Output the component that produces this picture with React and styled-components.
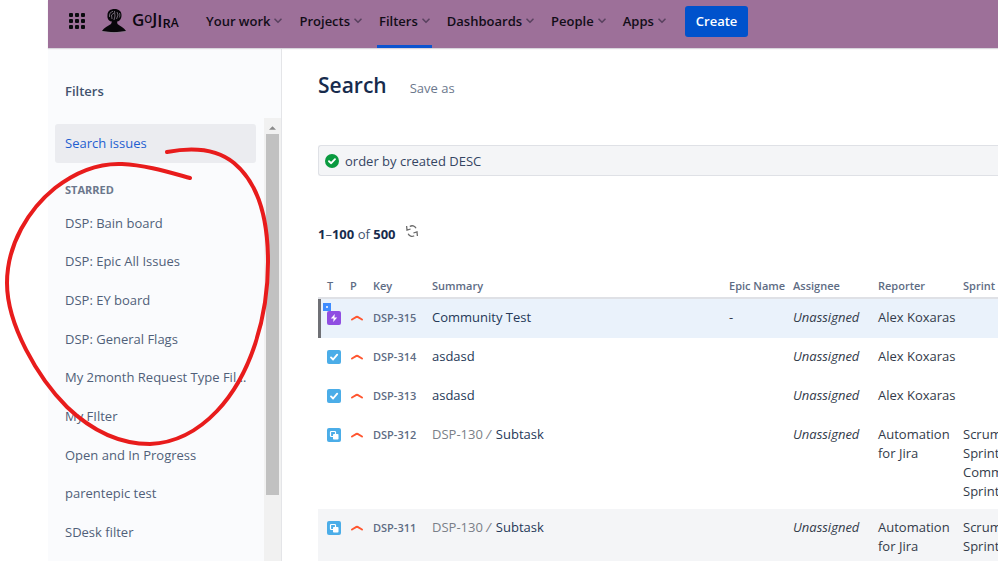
import React, { useState } from 'react';
import styled, { createGlobalStyle, css } from 'styled-components';

const starred = [
  'DSP: Bain board',
  'DSP: Epic All Issues',
  'DSP: EY board',
  'DSP: General Flags',
  'My 2month Request Type Filter',
  'My FIlter',
  'Open and In Progress',
  'parentepic test',
  'SDesk filter',
];

const navItems = ['Your work', 'Projects', 'Filters', 'Dashboards', 'People', 'Apps'];

const sprints = ['Scrum', 'Sprint', 'Comm', 'Sprint'];

const issues = [
  { key: 'DSP-315', type: 'epic', summary: 'Community Test', epic: '-', reporter: 'Alex Koxaras', selected: true },
  { key: 'DSP-314', type: 'task', summary: 'asdasd', reporter: 'Alex Koxaras' },
  { key: 'DSP-313', type: 'task', summary: 'asdasd', reporter: 'Alex Koxaras' },
  { key: 'DSP-312', type: 'subtask', parent: 'DSP-130', summary: 'Subtask', reporter: 'Automation for Jira', sprints },
  { key: 'DSP-311', type: 'subtask', parent: 'DSP-130', summary: 'Subtask', reporter: 'Automation for Jira', sprints, shaded: true },
];

const AppSwitcherIcon = () => (
  <svg width="16" height="16" viewBox="0 0 16 16" fill="#0b0b0f">
    {[0, 6, 12].map((y) => [0, 6, 12].map((x) => (
      <rect key={`${x}-${y}`} x={x} y={y} width="4" height="4" rx="1" />
    )))}
  </svg>
);

const Logo = () => (
  <svg width="82" height="30" viewBox="0 0 82 30" role="img" aria-label="Gojira">
    <path d="M0 25 C2 21.500 6 20 9 18 L10 15.500 C7 15.500 5 13 5.500 9 C5.500 5 8.500 3 12.500 3 C17 3 19.500 5.500 19.500 9 C19.500 13 17.500 15.500 15 15.500 L15.500 18 C18 20 22 21.500 24 25 C17 26.500 7 26.500 0 25 Z" fill="#08060a" />
    <path d="M7.500 11 C7 8 8.500 5.800 11 5.300 M10 13 L9.500 9 L12 7 M12.500 5 L13 10 L12 14 M15 6 L16 9 L14.500 13 M17.500 7 C18 8.500 18 10 17.300 11.500" fill="none" stroke="#9b8f9f" strokeWidth="0.700" />
    <path d="M0 25.500 C7 27 17 27 24 25.500" fill="none" stroke="#8c8090" strokeWidth="0.800" />
    <LogoText x="30" y="20">
      <tspan fontSize="17">G</tspan>
      <tspan fontSize="10" dy="-3">O</tspan>
      <tspan fontSize="17" dy="2">J</tspan>
      <tspan fontSize="17" dy="2">I</tspan>
      <tspan fontSize="13" dy="1">R</tspan>
      <tspan fontSize="12" dy="-1">A</tspan>
    </LogoText>
  </svg>
);

const Chevron = () => (
  <svg width="8" height="6" viewBox="0 0 8 6" fill="none" stroke="#5a4260" strokeWidth="1.600" strokeLinecap="round" strokeLinejoin="round">
    <path d="M1 1.200 L4 4.300 L7 1.200" />
  </svg>
);

const ValidIcon = () => (
  <svg width="14" height="14" viewBox="0 0 14 14">
    <circle cx="7" cy="7" r="7" fill="#0a9a3f" />
    <path d="M4 7.200 L6.200 9.200 L10 5.200" fill="none" stroke="#fff" strokeWidth="1.900" strokeLinecap="round" strokeLinejoin="round" />
  </svg>
);

const RefreshIcon = () => (
  <svg width="12" height="12" viewBox="0 0 12 12" fill="none" stroke="#6b6b6b" strokeWidth="1.300">
    <path d="M3.800 1.500 C6 0 8.800 0.800 10 3.300" />
    <path d="M8.200 10.700 C6 12 3.200 11.200 2.200 8.700" />
    <path d="M0.600 1 L1 5.200 L4.600 4" />
    <path d="M11.400 11 L11 6.800 L7.400 8" />
  </svg>
);

const PriorityIcon = () => (
  <svg width="14" height="14" viewBox="0 0 14 14" role="img" aria-label="Medium priority">
    <path d="M2 8.500 L6.400 6 Q7 5.700 7.600 6 L12 8.500" fill="none" stroke="#ff5630" strokeWidth="2" strokeLinecap="round" />
  </svg>
);

const TypeIcon = ({ type }) => (
  <svg width="14" height="14" viewBox="0 0 14 14" role="img" aria-label={type}>
    <rect width="14" height="14" rx="2" fill={type === 'epic' ? '#904ee2' : '#4bade8'} />
    {type === 'epic' && <path d="M7.800 3 L3.800 7.600 L6.600 7.600 L6.200 11 L10.200 6.400 L7.400 6.400 Z" fill="#fff" />}
    {type === 'task' && (
      <path d="M4 7.400 L6.100 9.500 L10.200 4.700" fill="none" stroke="#fff" strokeWidth="1.900" strokeLinecap="round" strokeLinejoin="round" />
    )}
    {type === 'subtask' && (
      <>
        <rect x="3.500" y="3.500" width="5" height="5" rx="0.800" fill="none" stroke="#fff" strokeWidth="1.200" />
        <rect x="6" y="6" width="5.500" height="5.500" rx="0.800" fill="#fff" />
      </>
    )}
  </svg>
);

const Marker = () => (
  <MarkerSvg width="280" height="460" viewBox="0 0 280 460" aria-hidden="true">
    <path d="M167 152 C193 147 217 149 234 163 C257 182 268 216 268 262 C268 317 251 375 217 411 C197 432 175 443 150 444 C119 444 91 430 67 407 C38 378 7 325 7 283 C7 244 29 209 55 188 C77 171 98 163 122 164 C145 165 168 172 190 178" />
  </MarkerSvg>
);

const App = () => {
  const [query, setQuery] = useState('order by created DESC');

  return (
    <Page>
      <GlobalStyle />
      <TopBar>
        <IconButton type="button" aria-label="Switch apps"><AppSwitcherIcon /></IconButton>
        <LogoLink href="#home"><Logo /></LogoLink>
        <Nav>
          {navItems.map((item) => (
            <NavButton key={item} type="button" $active={item === 'Filters'}>
              {item}
              <Chevron />
            </NavButton>
          ))}
        </Nav>
        <CreateButton type="button">Create</CreateButton>
      </TopBar>

      <Body>
        <Sidebar>
          <SidebarTitle>Filters</SidebarTitle>
          <ScrollArea>
            <SidebarNav>
              <SearchLink href="#search">Search issues</SearchLink>
              <GroupTitle>STARRED</GroupTitle>
              <FilterList>
                {starred.map((name) => (
                  <li key={name}><FilterLink href="#filter">{name}</FilterLink></li>
                ))}
              </FilterList>
            </SidebarNav>
            <ScrollTrack>
              <ScrollArrow viewBox="0 0 8 4"><path d="M0 4 L4 0 L8 4 Z" /></ScrollArrow>
              <ScrollThumb />
            </ScrollTrack>
          </ScrollArea>
        </Sidebar>

        <Main>
          <TitleRow>
            <h1>Search</h1>
            <SaveButton type="button">Save as</SaveButton>
          </TitleRow>
          <QueryBox>
            <ValidIcon />
            <input aria-label="Query" value={query} onChange={(e) => setQuery(e.target.value)} />
          </QueryBox>
          <ResultCount>
            <span><b>1</b>–<b>100</b> of <b>500</b></span>
            <IconButton type="button" aria-label="Refresh results"><RefreshIcon /></IconButton>
          </ResultCount>

          <IssueTable>
            <colgroup>
              <Col $w={32} />
              <Col $w={23} />
              <Col $w={59} />
              <Col />
              <Col $w={64} />
              <Col $w={85} />
              <Col $w={85} />
              <Col $w={35} />
            </colgroup>
            <thead>
              <tr>
                <th>T</th>
                <th>P</th>
                <th>Key</th>
                <th>Summary</th>
                <th>Epic Name</th>
                <th>Assignee</th>
                <th>Reporter</th>
                <th>Sprint</th>
              </tr>
            </thead>
            <tbody>
              {issues.map((issue) => (
                <IssueRow key={issue.key} $selected={issue.selected} $shaded={issue.shaded}>
                  <td>
                    <TypeCell>
                      <TypeIcon type={issue.type} />
                      {issue.selected && <FocusBadge />}
                    </TypeCell>
                  </td>
                  <td><TypeCell><PriorityIcon /></TypeCell></td>
                  <td><KeyLink href="#issue">{issue.key}</KeyLink></td>
                  <td>
                    {issue.parent && <ParentLink href="#parent">{issue.parent} <i>/</i></ParentLink>}
                    <SummaryLink href="#issue">{issue.summary}</SummaryLink>
                  </td>
                  <td>{issue.epic}</td>
                  <td><em>Unassigned</em></td>
                  <td>{issue.reporter}</td>
                  <td>
                    {issue.sprints && issue.sprints.map((line, i) => <div key={i}>{line}</div>)}
                  </td>
                </IssueRow>
              ))}
            </tbody>
          </IssueTable>
        </Main>
      </Body>
      <Marker />
    </Page>
  );
};

export default App;


const GlobalStyle = createGlobalStyle`
  * { box-sizing: border-box; }
  body {
    margin: 0;
    background: #fff;
    color: #333b4a;
    font-family: "Open Sans", "Noto Sans", sans-serif;
    font-size: 13px;
    line-height: 19px;
  }
  button, input { font: inherit; color: inherit; }
  a { color: inherit; text-decoration: none; }
  svg { display: block; flex: none; }
`;

const Page = styled.div`
  position: relative;
  height: 100vh;
  padding-left: 48px;
  display: flex;
  flex-direction: column;
  overflow: hidden;
`;

const TopBar = styled.header`
  flex: none;
  height: 48px;
  padding: 0 21px 6px;
  display: flex;
  align-items: center;
  background: #9d7099;
  box-shadow: 0 1px 1px #d8d5dc;
  z-index: 1;
`;

const IconButton = styled.button`
  border: none;
  background: none;
  padding: 0;
  cursor: pointer;
`;

const LogoLink = styled.a`
  margin-left: 17px;
`;

const LogoText = styled.text`
  font-family: "Open Sans", sans-serif;
  font-weight: 600;
  fill: #0b0710;
`;

const Nav = styled.nav`
  display: flex;
  gap: 13px;
  margin-left: 20px;
`;

const NavButton = styled.button`
  display: flex;
  align-items: center;
  gap: 4px;
  height: 48px;
  margin-bottom: -6px;
  padding: 0 2px 3px;
  border: none;
  border-bottom: 3px solid ${(p) => (p.$active ? '#0b54d0' : 'transparent')};
  background: none;
  color: #120d18;
  font-weight: 600;
  cursor: pointer;
`;

const CreateButton = styled.button`
  height: 31px;
  margin-left: 17px;
  padding: 0 11px;
  border: none;
  border-radius: 3px;
  background: #0052cc;
  color: #fff;
  font-weight: 600;
  cursor: pointer;
`;

const Body = styled.div`
  flex: 1;
  min-height: 0;
  display: flex;
`;

const Sidebar = styled.aside`
  flex: none;
  width: 234px;
  display: flex;
  flex-direction: column;
  background: #fafbfd;
  border-right: 1px solid #e4e5e8;
`;

const SidebarTitle = styled.h2`
  margin: 0;
  padding: 34px 17px 17px;
  color: #42526e;
  font-size: 13px;
  font-weight: 600;
`;

const ScrollArea = styled.div`
  flex: 1;
  min-height: 0;
  display: flex;
`;

const SidebarNav = styled.nav`
  flex: 1;
  min-width: 0;
  padding: 6px 8px 0 7px;
  overflow: hidden;
`;

const SearchLink = styled.a`
  display: block;
  padding: 10px;
  border-radius: 3px;
  background: #ebecf0;
  color: #1f5fd0;
`;

const GroupTitle = styled.h3`
  margin: 0;
  padding: 17px 10px 5px;
  color: #6b778c;
  font-size: 11px;
  font-weight: 700;
  line-height: 19px;
`;

/* nine equal rows share the height */
const FilterList = styled.ul`
  display: grid;
  grid-auto-rows: 1fr;
  align-items: center;
  height: 348px;
  margin: 0;
  padding: 0 8px 0 10px;
  list-style: none;
  li { min-width: 0; }
`;

const FilterLink = styled.a`
  display: block;
  color: #505f79;
  overflow: hidden;
  text-overflow: ellipsis;
  white-space: nowrap;
`;

const ScrollTrack = styled.div`
  width: 17px;
  padding: 8px 2px 0;
  display: flex;
  flex-direction: column;
  align-items: center;
  gap: 4px;
  background: #f1f1f1;
`;

const ScrollArrow = styled.svg`
  width: 7px;
  height: 4px;
  fill: #8a8a8a;
`;

const ScrollThumb = styled.div`
  width: 13px;
  height: 83%;
  background: #c1c1c1;
`;

const Main = styled.main`
  flex: 1;
  min-width: 0;
  padding: 22px 0 0 36px;
`;

const TitleRow = styled.div`
  display: flex;
  align-items: baseline;
  gap: 23px;
  h1 {
    margin: 0;
    color: #172b4d;
    font-size: 21px;
    font-weight: 600;
    line-height: 30px;
  }
`;

const SaveButton = styled.button`
  padding: 0;
  border: none;
  background: none;
  color: #6b778c;
  cursor: pointer;
`;

const QueryBox = styled.div`
  display: flex;
  align-items: center;
  gap: 6px;
  height: 31px;
  margin-top: 45px;
  padding-left: 6px;
  border: 1px solid #dfe1e6;
  border-right: none;
  border-radius: 3px 0 0 3px;
  background: #f4f5f7;
  input {
    flex: 1;
    padding: 1px 0 0;
    border: none;
    outline: none;
    background: none;
    color: #344563;
  }
`;

const ResultCount = styled.div`
  display: flex;
  align-items: flex-start;
  gap: 10px;
  margin-top: 49px;
  color: #42526e;
  b { color: #172b4d; font-weight: 700; }
`;

const Col = styled.col`
  width: ${(p) => (p.$w ? `${p.$w}px` : 'auto')};
`;

const IssueTable = styled.table`
  width: 100%;
  margin-top: 31px;
  table-layout: fixed;
  border-collapse: separate;
  border-spacing: 0;

  th {
    height: 24px;
    padding: 0 0 2px;
    border-bottom: 2px solid #dfe1e6;
    color: #5e6c84;
    font-size: 11px;
    font-weight: 600;
    line-height: 19px;
    text-align: left;
    white-space: nowrap;
  }
  td {
    height: 39px;
    padding: 9px 0 8px;
    vertical-align: top;
  }
  th:first-child, td:first-child { padding-left: 9px; }
`;

const IssueRow = styled.tr`
  background: ${(p) => (p.$selected ? '#eaf2fb' : p.$shaded ? '#f4f5f7' : '#fff')};
  ${(p) => p.$selected && css`
    td:first-child { box-shadow: inset 3px 0 #6f7075; }
  `}
`;

const TypeCell = styled.div`
  position: relative;
  display: flex;
  align-items: center;
  height: 19px;
`;

const FocusBadge = styled.span`
  position: absolute;
  left: -4px;
  top: -5px;
  width: 8px;
  height: 8px;
  border: 3px solid #3e8cff;
  background: #cfe2ff;
`;

const KeyLink = styled.a`
  color: #5e6c84;
  font-size: 11px;
  font-weight: 600;
`;

const ParentLink = styled.a`
  margin-right: 5px;
  color: #7a7f88;
`;

const SummaryLink = styled.a`
  color: #253858;
`;

const MarkerSvg = styled.svg`
  position: absolute;
  left: 0;
  top: 0;
  z-index: 2;
  pointer-events: none;
  path {
    fill: none;
    stroke: #e81c1c;
    stroke-width: 4px;
    stroke-linecap: round;
  }
`;
